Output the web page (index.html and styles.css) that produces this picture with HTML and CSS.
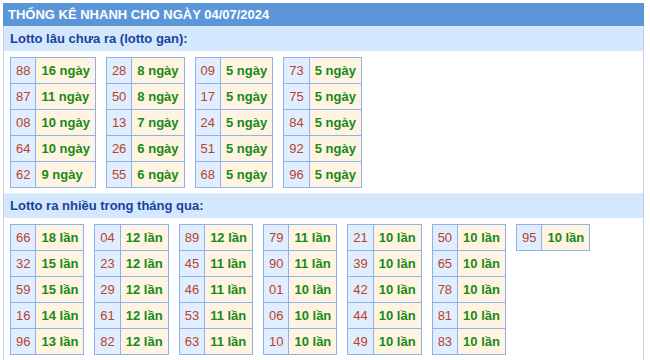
FILE: index.html
```html
<!DOCTYPE html>
<html>
<head>
<meta charset="utf-8">
<link rel="stylesheet" href="styles.css">
</head>
<body>
<div class="wrap">
  <div class="title">THỐNG KÊ NHANH CHO NGÀY 04/07/2024</div>
  <div class="box">
    <div class="sub">Lotto lâu chưa ra (lotto gan):</div>
    <div class="tables">
      <table><tr><td class="n">88</td><td class="v">16 ngày</td></tr><tr><td class="n">87</td><td class="v">11 ngày</td></tr><tr><td class="n">08</td><td class="v">10 ngày</td></tr><tr><td class="n">64</td><td class="v">10 ngày</td></tr><tr><td class="n">62</td><td class="v">9 ngày</td></tr></table>
      <table><tr><td class="n">28</td><td class="v">8 ngày</td></tr><tr><td class="n">50</td><td class="v">8 ngày</td></tr><tr><td class="n">13</td><td class="v">7 ngày</td></tr><tr><td class="n">26</td><td class="v">6 ngày</td></tr><tr><td class="n">55</td><td class="v">6 ngày</td></tr></table>
      <table><tr><td class="n">09</td><td class="v">5 ngày</td></tr><tr><td class="n">17</td><td class="v">5 ngày</td></tr><tr><td class="n">24</td><td class="v">5 ngày</td></tr><tr><td class="n">51</td><td class="v">5 ngày</td></tr><tr><td class="n">68</td><td class="v">5 ngày</td></tr></table>
      <table><tr><td class="n">73</td><td class="v">5 ngày</td></tr><tr><td class="n">75</td><td class="v">5 ngày</td></tr><tr><td class="n">84</td><td class="v">5 ngày</td></tr><tr><td class="n">92</td><td class="v">5 ngày</td></tr><tr><td class="n">96</td><td class="v">5 ngày</td></tr></table>
    </div>
    <div class="sub">Lotto ra nhiều trong tháng qua:</div>
    <div class="tables">
      <table><tr><td class="n">66</td><td class="v">18 lần</td></tr><tr><td class="n">32</td><td class="v">15 lần</td></tr><tr><td class="n">59</td><td class="v">15 lần</td></tr><tr><td class="n">16</td><td class="v">14 lần</td></tr><tr><td class="n">96</td><td class="v">13 lần</td></tr></table>
      <table><tr><td class="n">04</td><td class="v">12 lần</td></tr><tr><td class="n">23</td><td class="v">12 lần</td></tr><tr><td class="n">29</td><td class="v">12 lần</td></tr><tr><td class="n">61</td><td class="v">12 lần</td></tr><tr><td class="n">82</td><td class="v">12 lần</td></tr></table>
      <table><tr><td class="n">89</td><td class="v">12 lần</td></tr><tr><td class="n">45</td><td class="v">11 lần</td></tr><tr><td class="n">46</td><td class="v">11 lần</td></tr><tr><td class="n">53</td><td class="v">11 lần</td></tr><tr><td class="n">63</td><td class="v">11 lần</td></tr></table>
      <table><tr><td class="n">79</td><td class="v">11 lần</td></tr><tr><td class="n">90</td><td class="v">11 lần</td></tr><tr><td class="n">01</td><td class="v">10 lần</td></tr><tr><td class="n">06</td><td class="v">10 lần</td></tr><tr><td class="n">10</td><td class="v">10 lần</td></tr></table>
      <table><tr><td class="n">21</td><td class="v">10 lần</td></tr><tr><td class="n">39</td><td class="v">10 lần</td></tr><tr><td class="n">42</td><td class="v">10 lần</td></tr><tr><td class="n">44</td><td class="v">10 lần</td></tr><tr><td class="n">49</td><td class="v">10 lần</td></tr></table>
      <table><tr><td class="n">50</td><td class="v">10 lần</td></tr><tr><td class="n">65</td><td class="v">10 lần</td></tr><tr><td class="n">78</td><td class="v">10 lần</td></tr><tr><td class="n">81</td><td class="v">10 lần</td></tr><tr><td class="n">83</td><td class="v">10 lần</td></tr></table>
      <table><tr><td class="n">95</td><td class="v">10 lần</td></tr></table>
    </div>
  </div>
</div>
</body>
</html>
```
FILE: styles.css
```css
html, body {
  margin: 0;
  padding: 0;
  background: #ffffff;
  font-family: "Liberation Sans", Arial, sans-serif;
  font-size: 13px;
}
.wrap {
  margin: 3px 0 0 3px;
  width: 641px;
}
.title {
  background: #5b97d8;
  color: #ffffff;
  font-weight: bold;
  height: 23px;
  line-height: 23px;
  padding-left: 5px;
}
.box {
  border-left: 1px solid #c6cde3;
  border-right: 1px solid #c6cde3;
  min-height: 340px;
}
.sub {
  background: #d3e8fc;
  color: #1b3f9e;
  font-weight: bold;
  height: 24px;
  line-height: 24px;
  padding-left: 6px;
  border-top: 1px solid #e4f0fd;
}
.tables {
  display: flex;
  align-items: flex-start;
  gap: 10px;
  padding: 6px 6px 5px 6px;
}
table {
  border-collapse: collapse;
}
td {
  border: 1px solid #8fb1ee;
  height: 25px;
  padding: 0 5px;
  white-space: nowrap;
}
td.n {
  background: #e0eeff;
  color: #b8432a;
  text-align: center;
}
td.v {
  background: #fff4e1;
  color: #178a17;
  font-weight: bold;
}
```
